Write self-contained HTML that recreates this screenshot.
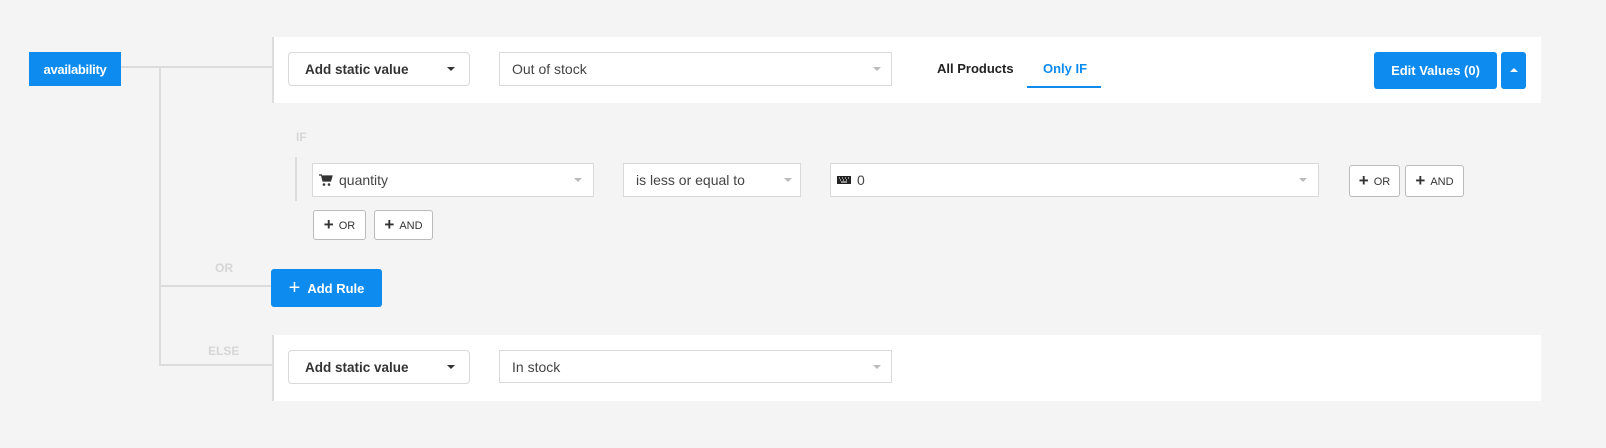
<!DOCTYPE html>
<html><head><meta charset="utf-8"><style>
*{box-sizing:border-box;margin:0;padding:0}
body{width:1606px;height:448px;background:#f4f4f4;font-family:"Liberation Sans",sans-serif;position:relative;overflow:hidden;color:#333}
.a{position:absolute}
.ln{position:absolute;background:#dcdcdc}
.sel{position:absolute;background:#fff;border:1px solid #d9d9d9;font-size:14px;color:#444;display:flex;align-items:center;padding-left:12px}
.car{position:absolute;width:0;height:0;border-left:4px solid transparent;border-right:4px solid transparent;border-top:4px solid #bbb;top:50%;margin-top:-2px}
.btn{position:absolute;background:#fff;border:1px solid #bbb;border-radius:3px;font-size:11px;color:#333;display:flex;align-items:center;justify-content:center;gap:5px;line-height:1}
.btn b{font-size:17px;font-weight:bold;line-height:1;position:relative;top:-1px}
.btn span{position:relative;top:1px}
.lbl{position:absolute;color:#d6d6d6;font-weight:bold;font-size:12px}
</style></head><body>
<div class="ln" style="left:120px;top:66px;width:152px;height:2px"></div>
<div class="ln" style="left:159px;top:66px;width:2px;height:300px"></div>
<div class="ln" style="left:159px;top:285px;width:113px;height:2px"></div>
<div class="ln" style="left:159px;top:364px;width:113px;height:2px"></div>
<div class="a" style="left:29px;top:52px;width:92px;height:34px;background:#0d8bef;color:#fff;font-size:13px;font-weight:bold;display:flex;align-items:center;justify-content:center;letter-spacing:-0.3px">availability</div>

<div class="a" style="left:272px;top:37px;width:1269px;height:66px;background:#fff;border-left:2px solid #ddd"></div>
<div class="sel" style="left:288px;top:52px;width:182px;height:34px;border-radius:4px;font-weight:bold;color:#333;padding-left:16px;font-size:13.5px">Add static value<span class="car" style="left:158px;border-top-color:#333"></span></div>
<div class="sel" style="left:499px;top:52px;width:393px;height:34px">Out of stock<span class="car" style="left:373px"></span></div>
<div class="a" style="left:937px;top:61px;font-size:13px;font-weight:bold;color:#222">All Products</div>
<div class="a" style="left:1043px;top:61px;font-size:13px;font-weight:bold;color:#0d8bef">Only IF</div>
<div class="a" style="left:1027px;top:86px;width:74px;height:2px;background:#0d8bef"></div>
<div class="a" style="left:1374px;top:52px;width:123px;height:37px;background:#0d8bef;border-radius:3px;color:#fff;font-size:13px;font-weight:bold;display:flex;align-items:center;justify-content:center">Edit Values (0)</div>
<div class="a" style="left:1501px;top:52px;width:25px;height:37px;background:#0d8bef;border-radius:3px"><span class="a" style="left:9px;top:16px;border-left:4px solid transparent;border-right:4px solid transparent;border-bottom:4px solid #fff"></span></div>

<div class="lbl" style="left:296px;top:130px">IF</div>
<div class="ln" style="left:295px;top:157px;width:2px;height:44px"></div>
<div class="sel" style="left:312px;top:163px;width:282px;height:34px;padding-left:6px"><svg width="14" height="14" viewBox="0 0 14 14" style="margin-right:6px"><path d="M0 2h2.5l1.5 6h7.5l1.5-5H3.5" fill="#333" stroke="#333" stroke-width="1.2"/><circle cx="5" cy="11.5" r="1.3" fill="#333"/><circle cx="10" cy="11.5" r="1.3" fill="#333"/></svg>quantity<span class="car" style="left:261px"></span></div>
<div class="sel" style="left:623px;top:163px;width:178px;height:34px">is less or equal to<span class="car" style="left:160px"></span></div>
<div class="sel" style="left:830px;top:163px;width:489px;height:34px;padding-left:6px"><svg width="14" height="10" viewBox="0 0 14 10" style="margin-right:6px"><rect x="0" y="1" width="14" height="8" fill="#222"/><path d="M2 3h1M5 3h1M8 3h1M11 3h1M3 5h1M6 5h1M9 5h1M4 7h6" stroke="#fff" stroke-width="1"/></svg>0<span class="car" style="left:468px"></span></div>
<div class="btn" style="left:1349px;top:165px;width:51px;height:32px"><b>+</b><span>OR</span></div>
<div class="btn" style="left:1405px;top:165px;width:59px;height:32px"><b>+</b><span>AND</span></div>
<div class="btn" style="left:313px;top:210px;width:53px;height:30px"><b>+</b><span>OR</span></div>
<div class="btn" style="left:374px;top:210px;width:59px;height:30px"><b>+</b><span>AND</span></div>

<div class="lbl" style="left:215px;top:261px">OR</div>
<div class="a" style="left:271px;top:269px;width:111px;height:38px;background:#0d8bef;border-radius:3px;color:#fff;font-size:13px;font-weight:bold;display:flex;align-items:center;justify-content:center;gap:7px"><span style="font-size:20px;font-weight:normal">+</span>Add Rule</div>

<div class="lbl" style="left:208px;top:344px">ELSE</div>
<div class="a" style="left:272px;top:335px;width:1269px;height:66px;background:#fff;border-left:2px solid #ddd"></div>
<div class="sel" style="left:288px;top:350px;width:182px;height:34px;border-radius:4px;font-weight:bold;color:#333;padding-left:16px;font-size:13.5px">Add static value<span class="car" style="left:158px;border-top-color:#333"></span></div>
<div class="sel" style="left:499px;top:350px;width:393px;height:33px">In stock<span class="car" style="left:373px"></span></div>
</body></html>
